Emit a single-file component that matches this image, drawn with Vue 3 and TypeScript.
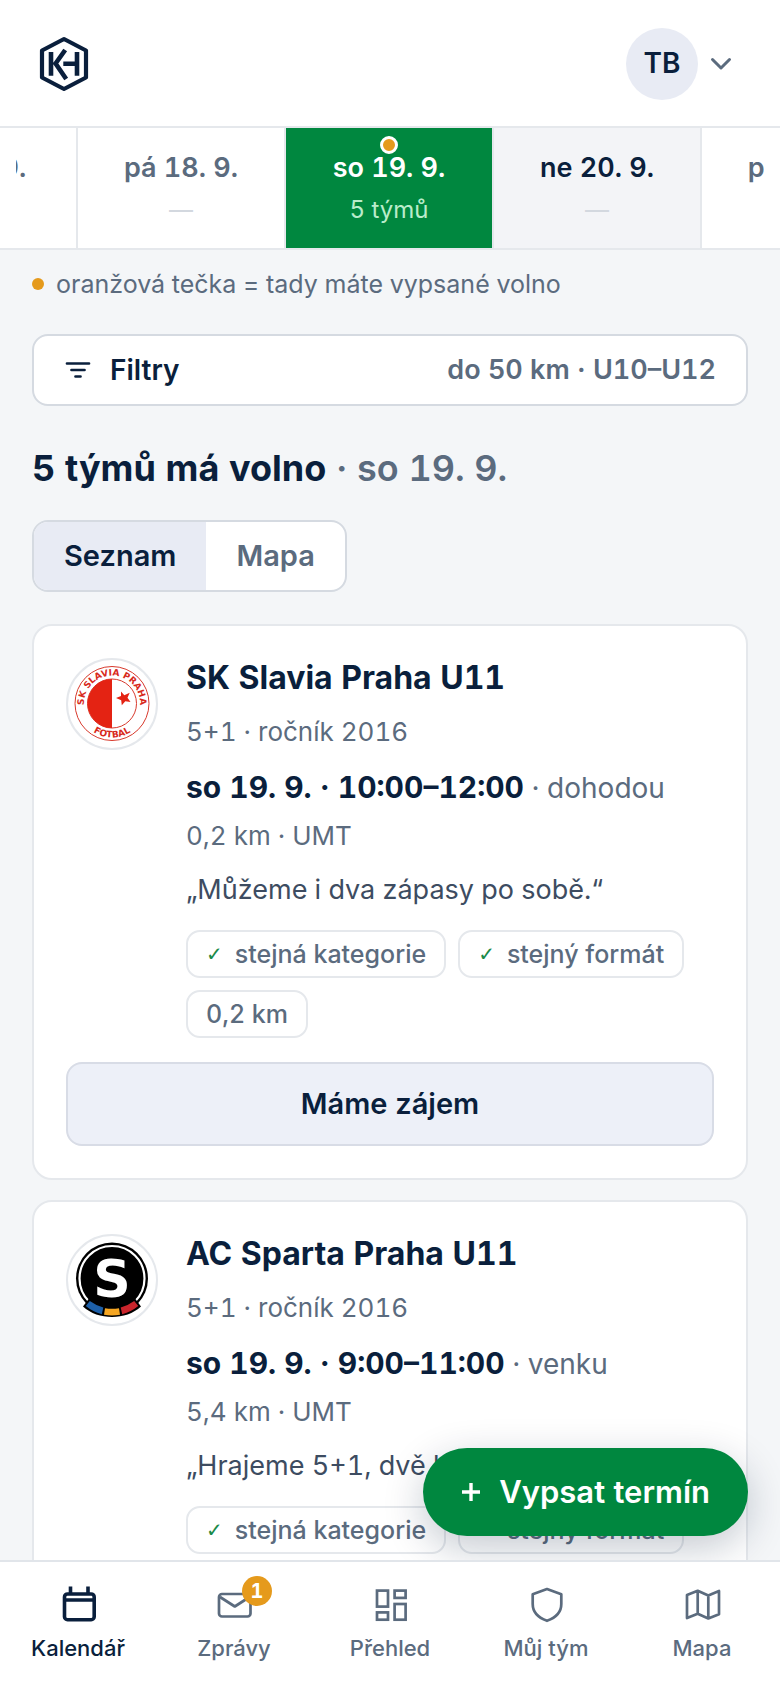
<script setup lang="ts">
import { ref } from 'vue'

interface Day {
  label: string
  teams: string
  weekend?: boolean
  mine?: boolean
}

interface Team {
  id: string
  name: string
  info: string
  time: string
  place: string
  distance: string
  note: string
  km: string
}

const days: Day[] = [
  { label: 'čt 17. 9.', teams: '—' },
  { label: 'pá 18. 9.', teams: '—' },
  { label: 'so 19. 9.', teams: '5 týmů', weekend: true, mine: true },
  { label: 'ne 20. 9.', teams: '—', weekend: true },
  { label: 'po 21. 9.', teams: '—' },
]
const selectedDay = ref(2)

const teams: Team[] = [
  {
    id: 'slavia',
    name: 'SK Slavia Praha U11',
    info: '5+1 · ročník 2016',
    time: 'so 19. 9. · 10:00–12:00',
    place: 'dohodou',
    distance: '0,2 km · UMT',
    note: '„Můžeme i dva zápasy po sobě.“',
    km: '0,2 km',
  },
  {
    id: 'sparta',
    name: 'AC Sparta Praha U11',
    info: '5+1 · ročník 2016',
    time: 'so 19. 9. · 9:00–11:00',
    place: 'venku',
    distance: '5,4 km · UMT',
    note: '„Hrajeme 5+1, dvě hřiště.“',
    km: '5,4 km',
  },
]

const view = ref<'list' | 'map'>('list')

const tabs = [
  { id: 'calendar', label: 'Kalendář', badge: 0 },
  { id: 'messages', label: 'Zprávy', badge: 1 },
  { id: 'overview', label: 'Přehled', badge: 0 },
  { id: 'team', label: 'Můj tým', badge: 0 },
  { id: 'map', label: 'Mapa', badge: 0 },
]
const activeTab = ref('calendar')
</script>

<template>
  <div class="app">
    <header class="topbar">
      <a class="brand" href="#" aria-label="KH">
        <svg class="brand-mark" viewBox="0 0 64 64" fill="none" stroke="currentColor">
          <path d="M32 7 54 18.500V45.500L32 57 10 45.500V18.500Z" stroke-width="4.200" stroke-linejoin="round" />
          <path d="M19 20V43.700M33.200 18 23.600 31.500 34.200 47M31.300 31.700H45M45 20V43.700" stroke-width="4.600" />
        </svg>
      </a>
      <button class="account" type="button" aria-label="Účet">
        <span class="avatar">TB</span>
        <svg class="chevron" viewBox="0 0 22 22" fill="none" stroke="currentColor" stroke-width="3" stroke-linecap="round" stroke-linejoin="round">
          <path d="M2.500 6.500 11 15 19.500 6.500" />
        </svg>
      </button>
    </header>

    <nav class="days" aria-label="Dny">
      <div class="days-track">
        <button
          v-for="(day, i) in days"
          :key="day.label"
          type="button"
          class="day"
          :class="{ weekend: day.weekend, selected: i === selectedDay }"
          @click="selectedDay = i"
        >
          <span v-if="day.mine" class="day-dot"></span>
          <span class="day-label">{{ day.label }}</span>
          <span class="day-teams" :class="{ none: day.teams === '—' }">{{ day.teams }}</span>
        </button>
      </div>
    </nav>

    <main class="content">
      <p class="legend"><span class="legend-dot"></span>oranžová tečka = tady máte vypsané volno</p>

      <button class="filters" type="button">
        <svg class="filters-icon" viewBox="0 0 28 28" fill="none" stroke="currentColor" stroke-width="2.700" stroke-linecap="round">
          <path d="M3 7.500H25M7.500 14H20.500M11.500 20.500H16.500" />
        </svg>
        <span class="filters-title">Filtry</span>
        <span class="filters-value">do 50 km · U10–U12</span>
      </button>

      <h1 class="heading">5 týmů má volno <span class="heading-date">· so 19. 9.</span></h1>

      <div class="segmented">
        <button type="button" class="segment" :class="{ on: view === 'list' }" @click="view = 'list'">Seznam</button>
        <button type="button" class="segment" :class="{ on: view === 'map' }" @click="view = 'map'">Mapa</button>
      </div>

      <section class="cards">
        <article v-for="team in teams" :key="team.id" class="card">
          <div class="card-body">
            <div class="crest">
              <svg v-if="team.id === 'slavia'" viewBox="0 0 88 88">
                <defs>
                  <path id="slavia-top" d="M21 59.500A28 28 0 1 1 67 59.500" />
                  <path id="slavia-bottom" d="M14 59.500A34 34 0 0 0 74 59.500" />
                </defs>
                <circle cx="44" cy="43.500" r="37" fill="#fff" stroke="#d8392c" stroke-width="1" />
                <circle cx="44" cy="43.500" r="24.500" fill="#fff" stroke="#d8392c" stroke-width="1" />
                <path d="M44 19A24.500 24.500 0 0 0 44 68Z" fill="#e42313" />
                <path d="M53 31.500 56.300 35.300 61.700 32.800 59.500 37.800 62.500 42 57.300 41.300 53.800 45.200 53.200 40.200 48 38 53 36Z" fill="#e42313" />
                <g class="slavia-text" fill="#d8291c">
                  <text text-anchor="middle"><textPath href="#slavia-top" startOffset="50%">SK SLAVIA PRAHA</textPath></text>
                  <text text-anchor="middle"><textPath href="#slavia-bottom" startOffset="50%">FOTBAL</textPath></text>
                </g>
              </svg>
              <svg v-else viewBox="0 0 88 88">
                <circle cx="44" cy="42.500" r="36" fill="#000" />
                <circle cx="44" cy="42.500" r="32.500" fill="none" stroke="#fff" stroke-width="2.200" />
                <path d="M21 62.500 15 70.500C30 84.500 58 84.500 73 70.500L67 62.500C54 73 34 73 21 62.500Z" fill="#000" />
                <path d="M21.800 65 17.800 70Q24.500 75.600 33.800 78.300L35.300 71.600Q28 69.500 21.800 65Z" fill="#1d5fa8" />
                <path d="M37 72.200 36 78.800Q44 80.200 52 78.800L51 72.200Q44 73.300 37 72.200Z" fill="#f5a623" />
                <path d="M66.200 65 70.200 70Q63.500 75.600 54.200 78.300L52.700 71.600Q60 69.500 66.200 65Z" fill="#c9252c" />
                <text class="sparta-letter" x="44" y="61" text-anchor="middle" fill="#fff">S</text>
              </svg>
            </div>
            <div class="card-text">
              <h2 class="team-name">{{ team.name }}</h2>
              <p class="team-info">{{ team.info }}</p>
              <p class="team-time"><strong>{{ team.time }}</strong> · {{ team.place }}</p>
              <p class="team-distance">{{ team.distance }}</p>
              <p class="team-note">{{ team.note }}</p>
              <ul class="chips">
                <li class="chip"><span class="tick">✓</span>stejná kategorie</li>
                <li class="chip"><span class="tick">✓</span>stejný formát</li>
                <li class="chip">{{ team.km }}</li>
              </ul>
            </div>
          </div>
          <button class="interest" type="button">Máme zájem</button>
        </article>
      </section>
    </main>

    <button class="fab" type="button">
      <svg class="fab-plus" viewBox="0 0 20 20" stroke="currentColor" stroke-width="3.400">
        <path d="M1 10H19M10 1V19" />
      </svg>
      Vypsat termín
    </button>

    <nav class="tabbar" aria-label="Hlavní navigace">
      <a
        v-for="tab in tabs"
        :key="tab.id"
        href="#"
        class="tab"
        :class="{ active: tab.id === activeTab }"
        @click.prevent="activeTab = tab.id"
      >
        <span class="tab-icon">
          <svg viewBox="0 0 40 40" fill="none" stroke="currentColor" stroke-width="2.700" stroke-linejoin="round">
            <g v-if="tab.id === 'calendar'" stroke-width="3.600">
              <rect x="6.500" y="10" width="29.700" height="25.700" rx="3" />
              <path d="M6.500 16H36M12.500 2.500V9M30 2.500V9" />
            </g>
            <g v-else-if="tab.id === 'messages'">
              <rect x="5" y="10" width="31.500" height="22.500" rx="3" />
              <path d="M6 13 20.800 22.500 35.500 13" />
            </g>
            <g v-else-if="tab.id === 'overview'" stroke-linejoin="miter">
              <rect x="7" y="6.600" width="11" height="16" />
              <rect x="7" y="28.400" width="11" height="7.300" />
              <rect x="24.600" y="6.600" width="11" height="7.300" />
              <rect x="24.600" y="20" width="11" height="15.700" />
            </g>
            <path v-else-if="tab.id === 'team'" d="M21 5 35.300 10.300V20C35.300 29 29.500 33.800 21 36.800 12.500 33.800 6.700 29 6.700 20V10.300Z" />
            <path v-else d="M5 11 15.700 6.800 26.300 11.500 37 7V30.300L26.300 34.500 15.700 29.700 5 34ZM15.700 6.800V29.700M26.300 11.500V34.500" />
          </svg>
          <span v-if="tab.badge" class="badge">{{ tab.badge }}</span>
        </span>
        <span class="tab-label">{{ tab.label }}</span>
      </a>
    </nav>
  </div>
</template>

<style>
body {
  margin: 0;
  background: #f4f6f8;
}
</style>

<style scoped>
.app {
  position: relative;
  display: flex;
  flex-direction: column;
  height: 100vh;
  overflow: hidden;
  background: #f4f6f8;
  color: #0a1f3c;
  font-family: Inter, "Liberation Sans", sans-serif;
  font-size: 26px;
  line-height: 36px;
  font-variant-numeric: tabular-nums;
}

.app *,
.app {
  box-sizing: border-box;
}

button {
  margin: 0;
  padding: 0;
  border: 0;
  background: none;
  color: inherit;
  font: inherit;
  font-variant-numeric: inherit;
  cursor: pointer;
}

p,
h1,
h2,
ul {
  margin: 0;
  padding: 0;
}

svg {
  display: block;
}

.topbar {
  display: flex;
  align-items: center;
  justify-content: space-between;
  flex: none;
  padding: 28px 48px 26px 32px;
  border-bottom: 2px solid #e5e8ec;
  background: #fff;
}

.brand {
  color: #0a1f3c;
}

.brand-mark {
  width: 64px;
  height: 64px;
}

.account {
  display: flex;
  align-items: center;
  gap: 12px;
}

.avatar {
  width: 72px;
  height: 72px;
  border-radius: 50%;
  background: #e8ebf4;
  font-size: 28px;
  font-weight: 600;
  line-height: 70px;
  text-align: center;
}

.chevron {
  width: 22px;
  height: 22px;
  color: #5b6b7e;
}

.days {
  flex: none;
  padding: 0 16px;
  border-bottom: 2px solid #e5e8ec;
  background: #fff;
}

.days-track {
  display: flex;
  justify-content: center;
  overflow: hidden;
}

.day {
  position: relative;
  display: flex;
  flex: none;
  flex-direction: column;
  align-items: center;
  gap: 8px;
  width: 208px;
  padding: 22px 0;
  border-right: 2px solid #e5e8ec;
  color: #5b6b7e;
}

.day.weekend {
  background: #f3f4f7;
  color: #0a1f3c;
}

.day.selected {
  background: #00873f;
  color: #fff;
}

.day-label {
  font-size: 27px;
  font-weight: 600;
}

.day-teams {
  font-size: 24px;
  line-height: 32px;
}

.day-teams.none {
  color: #d3d8df;
}

.day.selected .day-teams {
  color: #b9eccb;
}

.day-dot {
  position: absolute;
  top: 8px;
  left: 50%;
  width: 18px;
  height: 18px;
  margin-left: -9px;
  border: 3px solid #fff;
  border-radius: 50%;
  background: #e59a1c;
}

.content {
  flex: 1;
  min-height: 0;
  padding: 16px 32px;
  overflow-y: auto;
  scrollbar-width: none;
}

.legend {
  display: flex;
  align-items: center;
  gap: 12px;
  color: #5b6b7e;
  font-size: 25px;
}

.legend-dot {
  width: 12px;
  height: 12px;
  border-radius: 50%;
  background: #e59a1c;
}

.filters {
  display: flex;
  align-items: center;
  width: 100%;
  height: 72px;
  margin-top: 32px;
  padding: 0 30px;
  border: 2px solid #d5dae1;
  border-radius: 16px;
  background: #fff;
  font-weight: 600;
}

.filters-icon {
  width: 28px;
  height: 28px;
}

.filters-title {
  margin-left: 18px;
  font-size: 28px;
}

.filters-value {
  margin-left: auto;
  color: #5b6b7e;
  font-size: 27px;
}

.heading {
  margin-top: 38px;
  font-size: 36px;
  font-weight: 700;
  line-height: 48px;
}

.heading-date {
  color: #5b6b7e;
  font-weight: 600;
}

.segmented {
  display: inline-flex;
  margin-top: 28px;
  border: 2px solid #d5dae1;
  border-radius: 16px;
  background: #fff;
  overflow: hidden;
  vertical-align: top;
}

.segment {
  height: 68px;
  padding: 0 30px;
  color: #5b6b7e;
  font-size: 29px;
  font-weight: 600;
}

.segment.on {
  background: #e8ebf4;
  color: #0a1f3c;
}

.cards {
  display: flex;
  flex-direction: column;
  gap: 20px;
  margin-top: 32px;
}

.card {
  padding: 32px;
  border: 2px solid #e5e8ec;
  border-radius: 20px;
  background: #fff;
}

.card-body {
  display: flex;
  align-items: flex-start;
  gap: 28px;
}

.crest {
  flex: none;
  width: 92px;
  height: 92px;
  border: 2px solid #e5e8ec;
  border-radius: 50%;
  background: #fff;
}

.slavia-text {
  font-family: "DejaVu Sans", sans-serif;
  font-size: 9px;
  font-weight: 700;
}

.sparta-letter {
  font-family: "DejaVu Sans", sans-serif;
  font-size: 52px;
  font-weight: 700;
}

.card-text {
  flex: 1;
  min-width: 0;
}

.team-name {
  font-size: 32px;
  font-weight: 700;
  line-height: 40px;
}

.team-info {
  margin-top: 16px;
  color: #5b6b7e;
}

.team-time {
  display: flow-root;
  margin-top: 18px;
  color: #5b6b7e;
  font-size: 28px;
  line-height: 40px;
}

.team-time strong {
  color: #0a1f3c;
  font-size: 30px;
  font-weight: 700;
  line-height: 36px;
}

.team-distance {
  margin-top: 10px;
  color: #5b6b7e;
}

.team-note {
  margin-top: 18px;
  color: #3d4c61;
  font-size: 27px;
}

.chips {
  display: flex;
  flex-wrap: wrap;
  gap: 12px;
  margin-top: 22px;
  list-style: none;
}

.chip {
  display: flex;
  align-items: center;
  gap: 12px;
  height: 48px;
  padding: 0 18px;
  border: 2px solid #e5e8ec;
  border-radius: 14px;
  color: #5b6b7e;
  font-size: 25px;
  font-weight: 500;
}

.tick {
  color: #1a8a48;
  font-family: "DejaVu Sans", sans-serif;
  font-size: 20px;
}

.interest {
  width: 100%;
  height: 84px;
  margin-top: 24px;
  border: 2px solid #d8dce6;
  border-radius: 16px;
  background: #edf0f8;
  font-size: 29px;
  font-weight: 600;
}

.fab {
  position: absolute;
  right: 32px;
  bottom: 152px;
  display: flex;
  align-items: center;
  gap: 18px;
  height: 88px;
  padding: 0 38px;
  border-radius: 44px;
  background: #00873f;
  box-shadow: 0 12px 40px rgba(10, 31, 60, 0.24);
  color: #fff;
  font-size: 31px;
  font-weight: 600;
}

.fab-plus {
  width: 20px;
  height: 20px;
}

.tabbar {
  position: relative;
  display: flex;
  flex: none;
  height: 128px;
  border-top: 2px solid #e1e5ea;
  background: #fff;
}

.tab {
  display: flex;
  flex: 1;
  flex-direction: column;
  align-items: center;
  gap: 8px;
  padding-top: 22px;
  color: #5b6b7e;
  font-size: 22px;
  font-weight: 500;
  line-height: 32px;
  text-decoration: none;
}

.tab.active {
  color: #0a1f3c;
}

.tab-icon {
  position: relative;
  width: 40px;
  height: 40px;
}

.badge {
  position: absolute;
  top: -8px;
  left: 28px;
  width: 30px;
  height: 30px;
  border-radius: 50%;
  background: #e59a1c;
  color: #fff;
  font-size: 20px;
  font-weight: 700;
  line-height: 30px;
  text-align: center;
}
</style>
